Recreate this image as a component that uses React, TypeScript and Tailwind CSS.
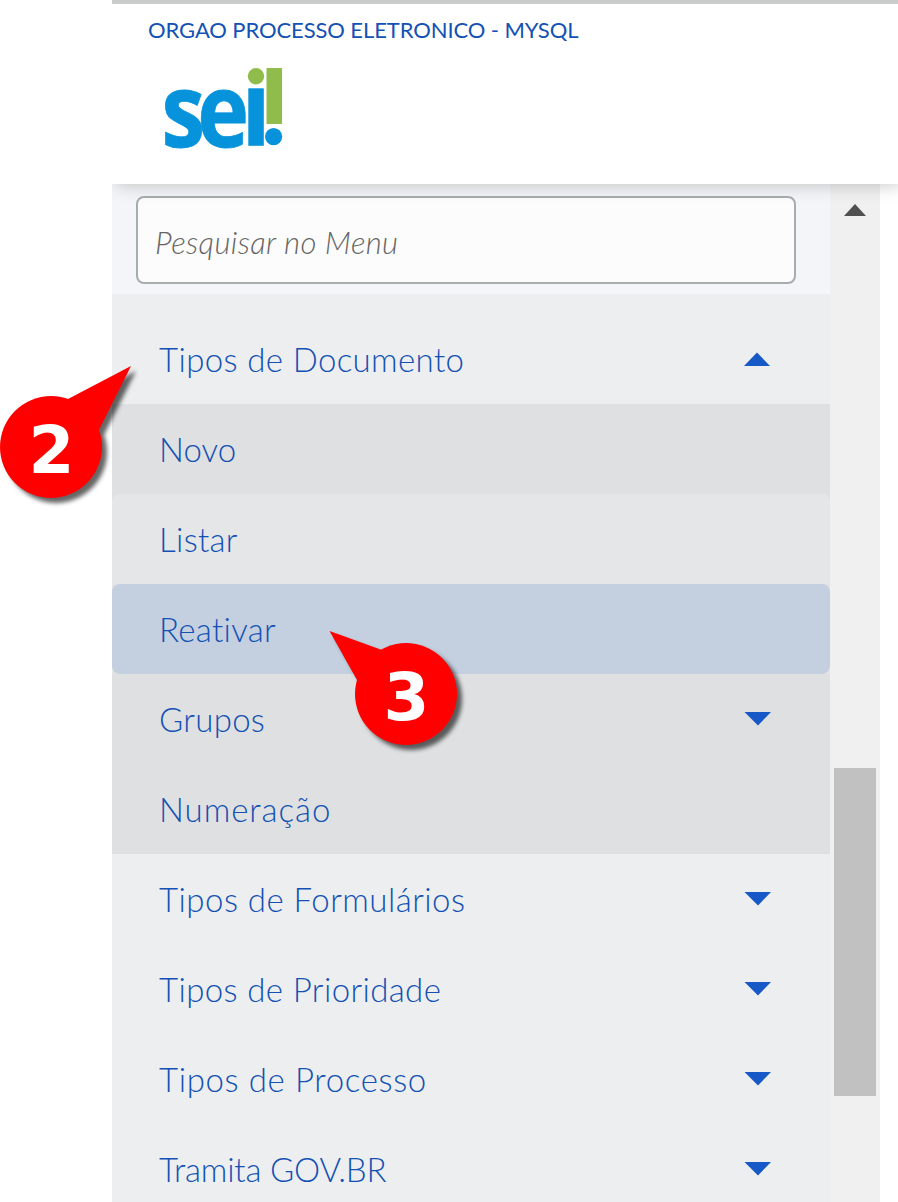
type Tone = 'base' | 'sub' | 'hover' | 'active';

interface Item {
  label: string;
  tone: Tone;
  spacing: string;
  arrow?: 'up' | 'down';
}

const items: Item[] = [
  { label: 'Tipos de Documento', tone: 'base', spacing: 'tracking-[0.37px]', arrow: 'up' },
  { label: 'Novo', tone: 'sub', spacing: 'tracking-[0.1px]' },
  { label: 'Listar', tone: 'hover', spacing: 'tracking-[0.3px]' },
  { label: 'Reativar', tone: 'active', spacing: 'tracking-[0.3px]' },
  { label: 'Grupos', tone: 'sub', spacing: 'tracking-[0.3px]', arrow: 'down' },
  { label: 'Numeração', tone: 'sub', spacing: 'tracking-[0.95px]' },
  { label: 'Tipos de Formulários', tone: 'base', spacing: 'tracking-[0.47px]', arrow: 'down' },
  { label: 'Tipos de Prioridade', tone: 'base', spacing: 'tracking-[0.38px]', arrow: 'down' },
  { label: 'Tipos de Processo', tone: 'base', spacing: 'tracking-[0.63px]', arrow: 'down' },
  { label: 'Tramita GOV.BR', tone: 'base', spacing: 'tracking-[-0.2px]', arrow: 'down' },
];

const wrapTone: Record<Tone, string> = {
  base: 'bg-[#edeef0]',
  sub: 'bg-[#dfe0e2]',
  hover: 'bg-[#dfe0e2]',
  active: 'bg-[#e2e3e5]',
};

const rowTone: Record<Tone, string> = {
  base: '',
  sub: '',
  hover: 'rounded-t-lg bg-[#e5e6e8]',
  active: 'rounded-lg bg-[#c4cfe0]',
};

function Logo() {
  return (
    <svg className="ml-9 block overflow-visible" width="152" height="142" viewBox="148 42 152 142">
      <text
        transform="translate(161.5 146.5) scale(0.85 1)"
        fontFamily="'Open Sans', sans-serif"
        fontWeight="700"
        fontSize="103"
        letterSpacing="-9"
        fill="#0693dc"
        stroke="#0693dc"
        strokeWidth="0.8"
      >
        se
      </text>
      <rect x="248.3" y="88.3" width="15.5" height="57.5" fill="#0693dc" />
      <circle cx="256" cy="76.2" r="8.2" fill="#90bc4c" />
      <rect x="266.5" y="68" width="15.5" height="56" fill="#90bc4c" />
      <circle cx="273.6" cy="136.6" r="8.6" fill="#0693dc" />
    </svg>
  );
}

function Arrow({ dir }: { dir: 'up' | 'down' }) {
  return (
    <svg className="mr-[59px] block" width="27" height="14" viewBox="0 0 27 14">
      {dir === 'up' ? (
        <path d="M0 14 L13 0.5 L26 14Z" fill="#1658c5" />
      ) : (
        <path d="M0.5 0 H27 L14 13.5Z" fill="#1658c5" />
      )}
    </svg>
  );
}

function Callout({ n, place, tail }: { n: string; place: string; tail: string }) {
  return (
    <svg
      className={`absolute ${place} overflow-visible drop-shadow-[5px_5px_2px_rgba(0,0,0,0.6)]`}
      width="102"
      height="102"
      viewBox="0 0 102 102"
    >
      <circle cx="51" cy="51" r="51" fill="#ff0000" />
      <path d={tail} fill="#ff0000" />
      <text
        x="51.5"
        y="77"
        textAnchor="middle"
        fontFamily="'DejaVu Sans', sans-serif"
        fontWeight="700"
        fontSize="66"
        fill="#ffffff"
      >
        {n}
      </text>
    </svg>
  );
}

export default function App() {
  return (
    <div className="relative h-[1202px] w-[898px] overflow-hidden bg-white pl-28 font-['Lato',sans-serif]">
      <header className="relative z-10 h-[184px] border-t-4 border-[#c9cccb] bg-white shadow-[4px_2px_16px_rgba(0,0,0,0.2)] [clip-path:inset(0_0_-30px_0)]">
        <div className="h-[38px] pl-9 pt-[10px]">
          <span className="block whitespace-nowrap text-[22px] leading-8 tracking-[-0.1px] text-[#1351b4]">
            ORGAO PROCESSO ELETRONICO - MYSQL
          </span>
        </div>
        <Logo />
      </header>
      <main className="flex h-[1018px]">
        <nav className="w-[718px] bg-[#edeef0]">
          <div className="h-[110px] bg-[#f4f5f8] px-6 pt-3">
            <div className="flex h-[88px] w-[660px] items-center rounded-lg border-2 border-[#a6adaf] bg-[#fcfcfc] pl-[17px] pt-1">
              <span className="whitespace-nowrap text-[31px] font-light italic tracking-[0.35px] text-[#666666]">
                Pesquisar no Menu
              </span>
            </div>
          </div>
          <ul className="pt-5">
            {items.map((item) => (
              <li key={item.label} className={wrapTone[item.tone]}>
                <div className={`flex h-[90px] items-center justify-between pl-[47px] ${rowTone[item.tone]}`}>
                  <span className={`whitespace-nowrap text-[33px] font-light leading-[90px] text-[#1351b4] ${item.spacing}`}>
                    {item.label}
                  </span>
                  {item.arrow && <Arrow dir={item.arrow} />}
                </div>
              </li>
            ))}
          </ul>
        </nav>
        <div className="flex w-[50px] flex-col items-center bg-[#f0f0f0] pt-5">
          <svg width="22" height="12" viewBox="0 0 22 12">
            <path d="M0 12 L11 0 L22 12Z" fill="#505050" />
          </svg>
          <div className="mt-[552px] h-[328px] w-[42px] bg-[#c1c1c1]" />
        </div>
      </main>
      <Callout n="2" place="left-0 top-[396px] z-20" tail="M68 3 L131 -30 L99 34 L60 60Z" />
      <Callout n="3" place="left-[355px] top-[643px] z-20" tail="M27 7 L-25.5 -12 L2 37 L51 60Z" />
    </div>
  );
}
